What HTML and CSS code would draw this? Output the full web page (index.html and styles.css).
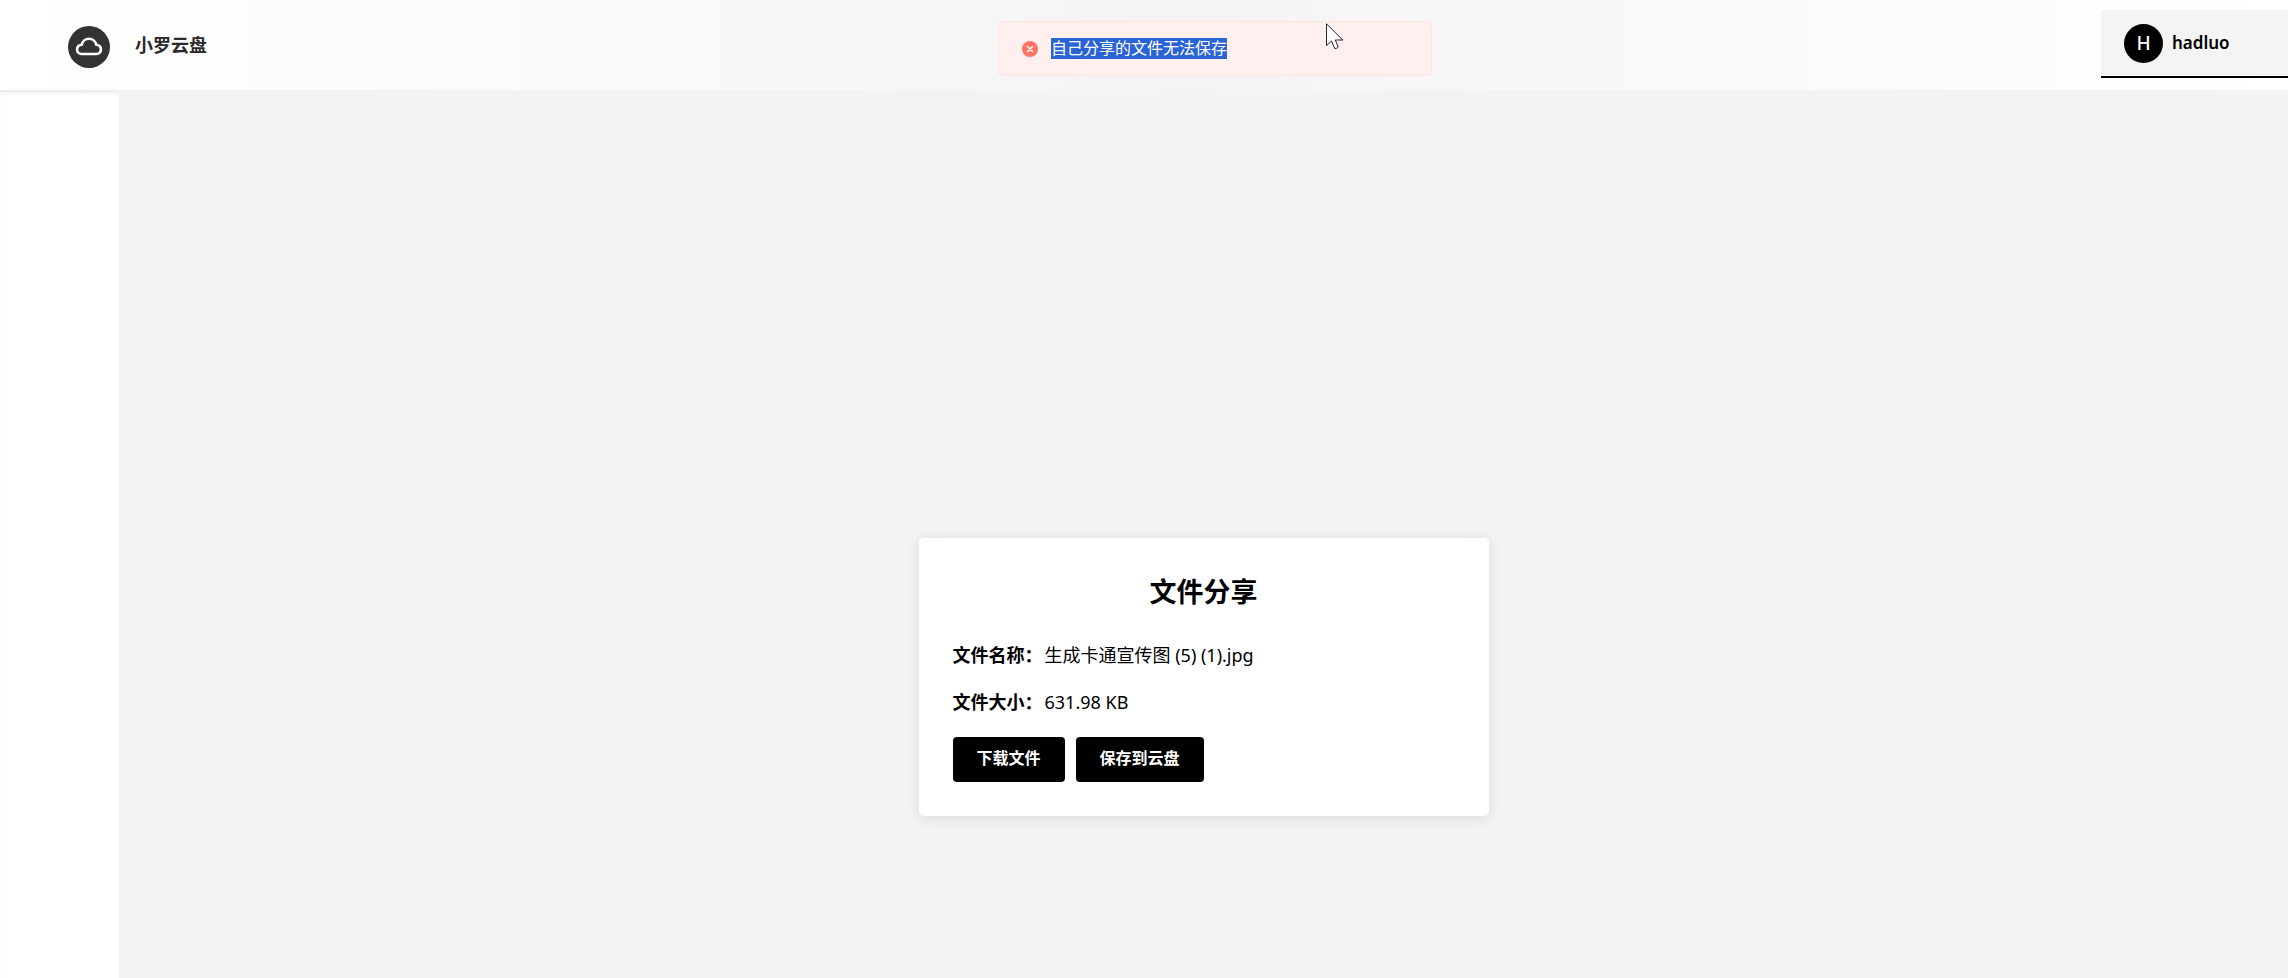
FILE: index.html
```
<!DOCTYPE html>
<html lang="zh-CN">
<head>
<meta charset="utf-8">
<title>小罗云盘</title>
<link rel="stylesheet" href="styles.css">
</head>
<body>
<header class="header">
  <div class="brand">
    <svg class="brand-logo" viewBox="0 0 42 42" aria-hidden="true">
      <circle cx="21" cy="21" r="21" fill="#333"/>
      <path d="M13.500 28A4.600 4.600 0 0 1 13.800 18.800A7.300 7.300 0 0 1 28.200 18.800A4.600 4.600 0 0 1 28.500 28Z" fill="none" stroke="#fff" stroke-width="2.600" stroke-linejoin="round"/>
    </svg>
    <span class="brand-name">小罗云盘</span>
  </div>
  <button class="user" type="button">
    <span class="avatar">H</span>
    <span class="user-name">hadluo</span>
  </button>
</header>
<div class="toast" role="alert">
  <svg class="toast-icon" viewBox="0 0 16 16" aria-hidden="true">
    <circle cx="8" cy="8" r="8" fill="#ff7466"/>
    <path d="M5.500 5.500L10.500 10.500M10.500 5.500L5.500 10.500" stroke="#fff" stroke-width="1.500" stroke-linecap="round"/>
  </svg>
  <mark class="toast-text">自己分享的文件无法保存</mark>
</div>
<svg class="pointer" viewBox="0 0 18 27" aria-hidden="true">
  <path d="M.5.8V22.500L5.500 18L8.800 25.500Q10.800 26 12.200 24L9.300 17H16.800Z" fill="#fff" stroke="#222433" stroke-linejoin="round"/>
</svg>
<div class="layout">
  <aside class="sidebar"></aside>
  <main class="content">
    <section class="card">
      <h1 class="card-title">文件分享</h1>
      <p class="row"><strong class="label">文件名称：</strong>生成卡通宣传图 (5) (1).jpg</p>
      <p class="row"><strong class="label">文件大小：</strong>631.98 KB</p>
      <div class="actions">
        <button class="btn" type="button">下载文件</button>
        <button class="btn" type="button">保存到云盘</button>
      </div>
    </section>
  </main>
</div>
</body>
</html>
```
FILE: styles.css
```
* {
  box-sizing: border-box;
}

body {
  margin: 0;
  min-height: 100vh;
  display: flex;
  flex-direction: column;
  background: #f3f3f3;
  color: #000;
  font-family: "Noto Sans", "Noto Sans CJK SC", sans-serif;
  font-size: 18px;
  line-height: 24px;
}

button {
  border: 0;
  font: inherit;
  color: inherit;
  cursor: pointer;
}

.header {
  height: 90px;
  display: flex;
  align-items: flex-start;
  justify-content: space-between;
  background: linear-gradient(90deg, #fff, #f4f4f4 52%, #fff);
}

.brand {
  display: flex;
  align-items: flex-start;
  gap: 25px;
  padding: 26px 0 0 68px;
}

.brand-logo {
  width: 42px;
  height: 42px;
}

.brand-name {
  padding-top: 7px;
  color: #2b2b2b;
  font-weight: 700;
}

.user {
  width: 187px;
  height: 68px;
  margin-top: 10px;
  padding: 0 0 0 23px;
  display: flex;
  align-items: center;
  gap: 9px;
  background: #f4f4f4;
  border-bottom: 2px solid #000;
  box-shadow: inset 0 -1px #fff;
}

.avatar {
  width: 39px;
  height: 39px;
  display: grid;
  place-items: center;
  border-radius: 50%;
  background: #000;
  color: #fff;
  font-size: 19px;
  font-weight: 500;
}

.user-name {
  font-size: 17px;
  font-weight: 600;
}

.toast {
  position: absolute;
  top: 21px;
  left: calc(50% + 71px);
  transform: translateX(-50%);
  width: 434px;
  height: 55px;
  padding: 0 23px;
  display: flex;
  align-items: center;
  gap: 13px;
  background: #fff0ef;
  border: 1px solid #ffe4e2;
  border-radius: 4px;
}

.toast-icon {
  width: 16px;
  height: 16px;
}

.toast-text {
  height: 21px;
  background: #2963d6;
  color: #fff;
  font-size: 16px;
  line-height: 21px;
}

.pointer {
  position: absolute;
  top: 23px;
  left: calc(50% + 182px);
  width: 18px;
  height: 27px;
}

.layout {
  flex: 1;
  display: flex;
}

.sidebar {
  width: 119px;
  background: #fff;
  box-shadow: inset 0 4px 4px -2px #e4e4e4;
}

.content {
  flex: 1;
  display: flex;
  justify-content: center;
  align-items: flex-start;
  padding-top: 448px;
}

.card {
  width: 570px;
  padding: 34px;
  background: #fff;
  border-radius: 5px;
  box-shadow: 0 2px 14px rgba(0, 0, 0, 0.1);
}

.card-title {
  margin: 0 0 31px;
  font-size: 27px;
  line-height: 40px;
  text-align: center;
}

.row {
  margin: 0 0 23px;
}

.label {
  margin-right: 2px;
}

.actions {
  display: flex;
  gap: 11px;
}

.btn {
  height: 45px;
  padding: 0 24px 3px;
  border-radius: 4px;
  background: #000;
  color: #fff;
  font-size: 16px;
  font-weight: 600;
}
```
